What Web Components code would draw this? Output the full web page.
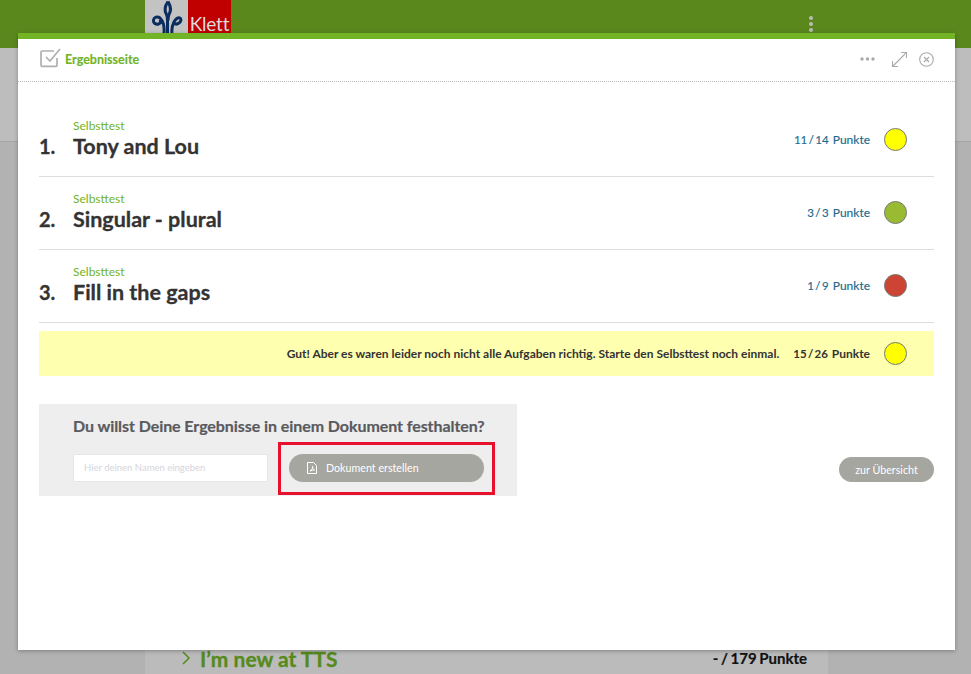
<!DOCTYPE html>
<html lang="de"><head><meta charset="utf-8"><title>Ergebnisseite</title>
<style>
html,body{margin:0;padding:0;height:100%;overflow:hidden}
body{font-family:Lato,"Liberation Sans",sans-serif;background:#b2b2b2}
</style></head><body>
<back-page></back-page>
<result-modal>
  <result-row num="1." title="Tony and Lou" points="11 / 14" color="#ffff00"></result-row>
  <result-row num="2." title="Singular - plural" points="3 / 3" color="#99bb33"></result-row>
  <result-row num="3." title="Fill in the gaps" points="1 / 9" color="#cc4433"></result-row>
  <result-summary></result-summary>
  <doc-panel></doc-panel>
</result-modal>
<script>
function def(name,html,init){
  customElements.define(name,class extends HTMLElement{
    constructor(){super();this.attachShadow({mode:'open'}).innerHTML=html;}
    connectedCallback(){if(init)init(this)}
  });
}
const FONT='font-family:Lato,"Liberation Sans",sans-serif;';
def('back-page',`<style>
:host{display:block;height:674px;background:#b2b2b2;overflow:hidden}
.top{height:48px;background:#5a881d;display:flex;position:relative}
.logo{margin-left:145px;width:86px;height:33px;display:flex}
.logo .l{width:43px;background:#c3c3c3}
.logo svg{display:block}
.logo .r{width:43px;height:33px;box-sizing:border-box;padding-top:14px;background:#c00000;color:#dcdcdc;font:19px/19px Lato,sans-serif;letter-spacing:-.2px;text-align:center}
.dots{position:absolute;left:809px;top:16px;display:flex;flex-direction:column;gap:2px}
.dots i{width:4px;height:4px;border-radius:50%;background:#b9bdb4}
.band{height:93px;background:#bdbdbd;border-bottom:1px solid #a6a6a6}
.col{margin:0 143px 0 145px;height:532px;background:#bbb;display:flex;flex-direction:column;justify-content:flex-end}
.item{height:24px;display:flex;align-items:center;padding:0 21px 0 36px;${FONT}font-weight:700;margin-bottom:4px}
.item svg{margin-right:9px}
.name{font-size:21px;color:#558a1c;flex:1;-webkit-text-stroke:.3px #558a1c}
.pts{font-size:15px;color:#111;word-spacing:-1px;-webkit-text-stroke:.2px #111}
</style>
<div class="top"><div class="logo"><div class="l"><svg width="43" height="33" viewBox="0 0 43 33" fill="none" stroke="#0b2c5e" stroke-width="3"><path d="M23 1.500c-3.500 5-4 9-1.500 13 .8 1.500 1 3 1 6V33M23 1.500c3 5 3.500 9 1 13-.8 1.500-1 3-1 6"/><path d="M19 33c.5-6-1-12-4-15-2.500-2-6-1-6.500 2-.5 3 2.500 5 5 4 2-.5 2.500-3 1.500-4.500"/><path d="M27 33c-.5-4 .5-8 2-11 1.500-3 4-5 6-4 1.500 1 1 4-1 5-2 1.500-4 1-5 0"/></svg></div><div class="r">Klett</div></div>
<div class="dots"><i></i><i></i><i></i></div></div>
<div class="band"></div>
<div class="col"><div class="item"><svg width="10" height="14" viewBox="0 0 10 14" fill="none" stroke="#558a1c" stroke-width="1.500"><path d="M2 1l6 6-6 6"/></svg><span class="name">I’m new at TTS</span><span class="pts">- / 179 Punkte</span></div></div>`);

def('result-modal',`<style>
:host{display:block;position:absolute;left:18px;top:33px;width:937px;height:617px;box-sizing:border-box;background:#fff;border-top:6px solid #72b426;box-shadow:0 1px 4px rgba(0,0,0,.3);${FONT}}
header{height:42px;display:flex;align-items:center;padding:0 21px 0 22px;border-bottom:1px dotted #bbb}
.ttl{font-size:12.500px;font-weight:700;color:#72b426;margin-left:4px;flex:1;margin-top:-2px;-webkit-text-stroke:.15px #72b426}
.tools{display:flex;align-items:center;margin-top:-2px}
main{padding:22px 21px 0 21px}
svg.ck{margin-top:-5px}
</style>
<header>
<svg class="ck" width="21" height="20" viewBox="0 0 21 20" fill="none" stroke="#b0b0b0" stroke-width="1.700"><path d="M17 10v7.300a1 1 0 0 1-1 1H2a1 1 0 0 1-1-1V4a1 1 0 0 1 1-1h12"/><path d="M6 9l4 4L20 1"/></svg>
<span class="ttl">Ergebnisseite</span>
<div class="tools">
<svg width="15" height="4" viewBox="0 0 15 4" fill="#aaa"><circle cx="2" cy="2" r="1.700"/><circle cx="7.500" cy="2" r="1.700"/><circle cx="13" cy="2" r="1.700"/></svg>
<svg style="margin-left:17px" width="15" height="15" viewBox="0 0 15 15" fill="none" stroke="#aaa" stroke-width="1.100"><path d="M.5 14.500l14-14M9 .5h5.500V6M.5 9v5.500H6"/></svg>
<svg style="margin-left:12px" width="15" height="15" viewBox="0 0 15 15" fill="none" stroke="#aaa" stroke-width="1.100"><circle cx="7.500" cy="7.500" r="6.800"/><path d="M5 5l5 5M10 5l-5 5"/></svg>
</div></header>
<main><slot></slot></main>`);

def('result-row',`<style>
:host{display:block;height:73px;box-sizing:border-box;border-bottom:1px solid #ddd}
.in{display:flex;height:72px;align-items:center;padding-right:27px}
.num{width:34px;font-size:20px;font-weight:700;color:#333;align-self:flex-end;line-height:26px;padding-bottom:17px;flex:none;-webkit-text-stroke:.3px #333}
.txt{flex:1;margin-top:-2px}
.sub{font-size:12px;line-height:14px;color:#72b426}
.t{font-size:21.500px;font-weight:700;color:#333;line-height:26px;-webkit-text-stroke:.3px #333}
.p{font-size:12px;color:#1b6a8d;margin:0 14px 2px 0;white-space:nowrap;-webkit-text-stroke:.15px #1b6a8d}
.n{font-size:11.500px;word-spacing:-1.500px;margin-right:1px}
.dot{width:21px;height:21px;border-radius:50%;border:1px solid #777;margin-bottom:2px}
</style>
<div class="in"><span class="num"></span><div class="txt"><div class="sub">Selbsttest</div><div class="t"></div></div><span class="p"><span class="n"></span> Punkte</span><span class="dot"></span></div>`,
el=>{const s=el.shadowRoot;s.querySelector('.num').textContent=el.getAttribute('num');s.querySelector('.t').textContent=el.getAttribute('title');s.querySelector('.n').textContent=el.getAttribute('points');s.querySelector('.dot').style.background=el.getAttribute('color');});

def('result-summary',`<style>
:host{display:flex;align-items:center;justify-content:flex-end;height:45px;margin-top:8px;background:#ffffb0;padding-right:27px;font-size:12px;font-weight:700;color:#333}
span{margin-bottom:1px}
.p{margin:0 14px 1px;white-space:nowrap}
.n{font-size:11.500px;word-spacing:-1.500px;margin:0 1px 0 0}
.dot{width:21px;height:21px;border-radius:50%;border:1px solid #777;background:#ff0;margin:0}
</style><span>Gut! Aber es waren leider noch nicht alle Aufgaben richtig. Starte den Selbsttest noch einmal.</span><span class="p"><span class="n">15 / 26</span> Punkte</span><span class="dot"></span>`);

def('doc-panel',`<style>
:host{display:flex;justify-content:space-between;align-items:flex-end;margin-top:28px}
.box{width:478px;height:92px;box-sizing:border-box;background:#eee;padding:12px 33px 0 34px}
h2{margin:0;font-size:16px;letter-spacing:-.07px;line-height:20px;font-weight:700;color:#5a5a5e;white-space:nowrap;-webkit-text-stroke:.2px #5a5a5e}
.r{display:flex;margin-top:18px;align-items:flex-start}
.inp{width:195px;height:28px;box-sizing:border-box;background:#fff;border:1px solid #e6e6e6;border-radius:2px;color:#d5d5dd;font-size:9.500px;line-height:26px;padding-left:10px;flex:none}
.wrap{margin:-12px 0 0 10px;border:3px solid #e8112d;width:217px;height:53px;box-sizing:border-box;padding:9px 8px 0 8px;flex:none}
.btn{height:28px;border-radius:14px;background:#a6a6a0;color:#fff;font-size:10.700px;display:flex;align-items:center;padding:0 0 1px 18px;box-sizing:border-box}
.btn svg{margin-right:9px}
.ov{height:25px;border-radius:13px;background:#a6a6a0;color:#fff;font-size:10.700px;width:95px;display:flex;align-items:center;justify-content:center;margin-bottom:14px}
</style>
<div class="box"><h2>Du willst Deine Ergebnisse in einem Dokument festhalten?</h2>
<div class="r"><div class="inp">Hier deinen Namen eingeben</div>
<div class="wrap"><div class="btn"><svg width="10" height="12" viewBox="0 0 10 12" fill="none" stroke="#fff" stroke-width="1"><path d="M.5.5h6l3 3v8h-9zM3 9c2-1 3-3 2.500-5 0 2 1 3.500 2 4-1.500 0-3 .3-4.500 1z"/></svg>Dokument erstellen</div></div></div></div>
<div class="ov">zur Übersicht</div>`);
</script></body></html>
